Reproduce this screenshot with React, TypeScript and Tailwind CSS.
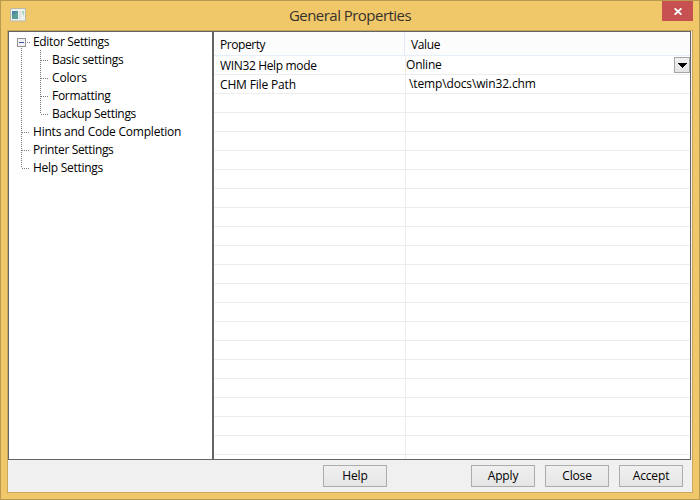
import React from 'react';

type Item = { name: string; track: string; children?: Item[] };

const rows: Item[] = [
  {
    name: 'Editor Settings',
    track: 'tracking-[-0.33px]',
    children: [
      { name: 'Basic settings', track: 'tracking-[-0.31px]' },
      { name: 'Colors', track: 'tracking-[-0.15px]' },
      { name: 'Formatting', track: 'tracking-[-0.3px]' },
      { name: 'Backup Settings', track: 'tracking-[-0.32px]' },
    ],
  },
  { name: 'Hints and Code Completion', track: 'tracking-[-0.22px]' },
  { name: 'Printer Settings', track: 'tracking-[-0.35px]' },
  { name: 'Help Settings', track: 'tracking-[-0.27px]' },
];

function TreeLines() {
  return (
    <svg className="absolute left-0 top-0" width="40" height="150" fill="none" stroke="#777" shapeRendering="crispEdges">
      <path d="M12.5 16V136" strokeDasharray="1 1" />
      <path d="M18 10.5H21" strokeDasharray="1 1" />
      <path d="M13 100.5H21M13 118.5H21M13 136.5H21" strokeDasharray="1 1" />
      <path d="M31.5 18V82" strokeDasharray="1 1" />
      <path d="M32 28.5H40M32 46.5H40M32 64.5H40M32 82.5H40" strokeDasharray="1 1" />
      <rect x="8.5" y="6.5" width="8" height="8" rx="1" fill="#f3f3f3" stroke="#929292" />
      <path d="M10 10.5H15" stroke="#4056a5" />
    </svg>
  );
}

function Tree() {
  return (
    <div className="relative w-[203px] shrink-0 bg-white">
      <TreeLines />
      <ul className="pt-px leading-[18px]">
        {rows.map((r) => (
          <li key={r.name}>
            <div className={`h-[18px] whitespace-nowrap pl-6 ${r.track}`}>{r.name}</div>
            {r.children?.map((c) => (
              <div key={c.name} className={`h-[18px] whitespace-nowrap pl-[43px] ${c.track}`}>{c.name}</div>
            ))}
          </li>
        ))}
      </ul>
    </div>
  );
}

function Grid() {
  const blanks = Array.from({ length: 19 }, (_, i) => i);
  return (
    <div className="flex min-w-0 flex-1 flex-col overflow-hidden bg-white">
      <div className="flex h-6 shrink-0 border-b border-[#e6eff7] bg-[#fcfcfc] leading-[25px]">
        <div className="w-[191px] border-r border-[#e2ebf5] pl-1.5 tracking-[-0.45px]">Property</div>
        <div className="pl-1.5 tracking-[-0.35px]">Value</div>
      </div>
      <div className="flex h-[19px] shrink-0 border-b border-[#ededed]">
        <div className="w-48 border-r border-[#ededed] pl-1.5 leading-[20px] tracking-[-0.35px]">WIN32 Help mode</div>
        <div className="flex flex-1 justify-between leading-[17px] tracking-[-0.2px]">
          <span>Online</span>
          <button className="mt-px flex h-4 w-4 items-center justify-center border border-[#a5a5a5] bg-linear-to-b from-[#f0f0f0] to-[#e4e4e4]">
            <svg width="9" height="5" shapeRendering="crispEdges"><path d="M0 0H9V1H8V2H7V3H6V4H5V5H4V4H3V3H2V2H1V1H0Z" /></svg>
          </button>
        </div>
      </div>
      <div className="flex h-[19px] shrink-0 border-b border-[#ededed]">
        <div className="w-48 border-r border-[#ededed] pl-1.5 leading-[20px] tracking-[-0.16px]">CHM File Path</div>
        <div className="pl-[3px] leading-[17px] tracking-[-0.14px]">\temp\docs\win32.chm</div>
      </div>
      {blanks.map((i) => (
        <div key={i} className="h-[19px] shrink-0 border-b border-[#ededed]">
          <div className="h-full w-48 border-r border-[#ededed]" />
        </div>
      ))}
      <div className="h-1 w-48 shrink-0 border-r border-[#ededed]" />
    </div>
  );
}

function Btn({ children }: { children: React.ReactNode }) {
  return (
    <button className="h-[22px] w-16 border border-[#acacac] bg-linear-to-b from-[#f0f0f0] to-[#e5e5e5] text-center leading-[20px] tracking-[-0.15px]">
      {children}
    </button>
  );
}

export default function App() {
  return (
    <div className="flex h-[500px] w-[700px] flex-col border border-[#b8994f] bg-[#f0c86a] px-1.5 pb-1.5 font-['Open_Sans','Noto_Sans',sans-serif] text-[12px] text-black">
      <header className="flex h-[29px] shrink-0 items-start">
        <svg className="ml-[3px] mt-[7px]" width="16" height="14">
          <rect x=".5" y=".5" width="15" height="12.5" fill="#eef0ee" stroke="#bdb9a7" />
          <rect x="2" y="3" width="6" height="8" fill="#58a097" />
          <path d="M2 3H8L2 8Z" fill="#4b86a5" />
          <rect x="9" y="3" width="2" height="8" fill="#dce4e2" />
          <path d="M12 3H14V8L12 5Z" fill="#a5d4bd" />
        </svg>
        <h1 className="flex-1 pl-[12px] text-center text-[15px] leading-[29px] tracking-[-0.53px] text-[#36322b]">General Properties</h1>
        <button className="flex h-5 w-[31px] items-center justify-center bg-[#c75050]">
          <svg width="8" height="7" stroke="#fff" strokeWidth="1.8"><path d="M.6 .3L7.4 6.7M7.4 .3L.6 6.7" /></svg>
        </button>
      </header>
      <main className="flex min-h-0 flex-1 flex-col border border-[#c9a659] bg-[#f0f0f0]">
        <section className="mr-px flex h-[429px] shrink-0 border border-[#646464]">
          <Tree />
          <div className="w-0.5 shrink-0 bg-[#646464]" />
          <Grid />
        </section>
        <footer className="flex pl-[315px] pt-[5px]">
          <Btn>Help</Btn>
          <div className="ml-[84px] flex gap-2.5">
            <Btn>Apply</Btn>
            <Btn>Close</Btn>
            <Btn>Accept</Btn>
          </div>
        </footer>
      </main>
    </div>
  );
}
